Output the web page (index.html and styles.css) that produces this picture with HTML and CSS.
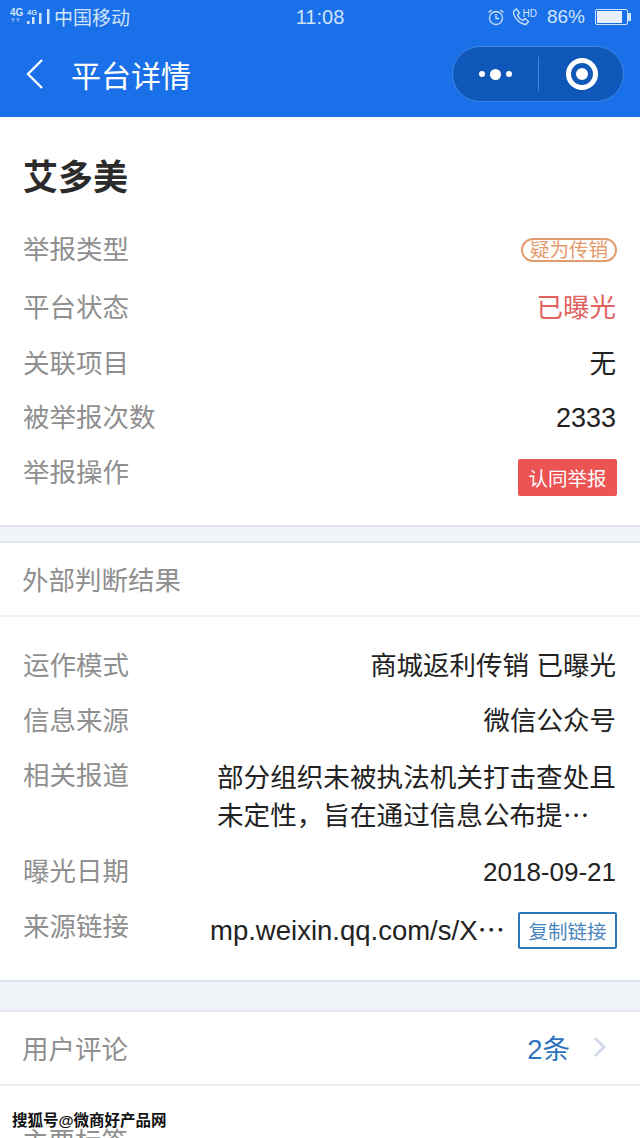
FILE: index.html
```html
<!DOCTYPE html>
<html lang="zh-CN">
  <head>
    <meta charset="UTF-8" />
    <meta name="viewport" content="width=device-width, initial-scale=1" />
    <title>平台详情</title>
    <link rel="stylesheet" href="styles.css">
  </head>
  <body>
    <div class="app">
      <header class="top">
        <div class="status">
          <div class="status-left">
            <svg class="signal" width="40" height="18" viewBox="0 0 40 18" fill="#cfe3fb">
              <text x="0" y="8" font-size="10" font-weight="700">4G</text>
              <text x="17" y="7" font-size="7.500" font-weight="700">4G</text>
              <path d="M3 10v4M1.500 12 3 10l1.500 2M8 10v4M6.500 12 8 10l1.500 2" fill="none" stroke="#8fbdf5"/>
              <path d="M17 13h2.500v3H17zM22 9h2.500v7H22zM29 5h2.500v11H29zM37 1h2.500v15H37z"/>
            </svg>
            <span class="carrier">中国移动</span>
          </div>
          <span class="clock">11:08</span>
          <div class="status-right">
            <svg class="alarm" width="18" height="18" viewBox="0 0 18 18" fill="none" stroke="#cfe3fb" stroke-width="1.300"><circle cx="9" cy="10" r="6.500"/><path d="M9 6v4.500h3M1.500 4.500 4.500 2M16.500 4.500 13.500 2"/></svg>
            <svg class="phone" width="18" height="18" viewBox="0 0 18 18" fill="none" stroke="#cfe3fb" stroke-width="1.300"><path d="M1.500 3.500 4.500 1l3 4-2 2c1 2.500 3 4.500 5.500 5.500l2-2 3.500 3-2.500 3C7.500 16 1.500 9.500 1.500 3.500Z"/></svg>
            <span class="hd">HD</span>
            <span class="pct">86%</span>
            <span class="battery"><span class="battery-fill"></span></span>
          </div>
        </div>
        <div class="nav">
          <svg class="back" width="20" height="32" viewBox="0 0 20 32" fill="none" stroke="#fff" stroke-width="2.400"><path d="M17 2 3 16l14 14"/></svg>
          <h1 class="nav-title">平台详情</h1>
          <div class="capsule">
            <div class="capsule-more"><i class="dot"></i><i class="dot dot-big"></i><i class="dot"></i></div>
            <span class="capsule-line"></span>
            <div class="capsule-close"><i class="ring"></i></div>
          </div>
        </div>
      </header>

      <section class="card card-first">
        <h2 class="name">艾多美</h2>
        <div class="row row-type"><span class="label">举报类型</span><span class="tag">疑为传销</span></div>
        <div class="row row-state"><span class="label">平台状态</span><span class="value red">已曝光</span></div>
        <div class="row row-link"><span class="label">关联项目</span><span class="value">无</span></div>
        <div class="row row-count"><span class="label">被举报次数</span><span class="value count">2333</span></div>
        <div class="row row-action"><span class="label">举报操作</span><button class="btn btn-red">认同举报</button></div>
      </section>

      <div class="gap gap-a"></div>

      <section class="card">
        <div class="card-head card-head-result">外部判断结果</div>
        <div class="card-body">
          <div class="row row-plain"><span class="label">运作模式</span><span class="value">商城返利传销 已曝光</span></div>
          <div class="row row-plain"><span class="label">信息来源</span><span class="value">微信公众号</span></div>
          <div class="row row-report"><span class="label">相关报道</span><p class="report">部分组织未被执法机关打击查处且未定性，旨在通过信息公布提<span class="ell">…</span></p></div>
          <div class="row row-plain"><span class="label">曝光日期</span><span class="value date">2018-09-21</span></div>
          <div class="row row-source">
            <span class="label">来源链接</span>
            <div class="source">
              <span class="source-url">mp.weixin.qq.com/s/X<span class="ell">…</span></span>
              <button class="btn btn-line">复制链接</button>
            </div>
          </div>
        </div>
      </section>

      <div class="gap gap-b"></div>

      <section class="card">
        <div class="card-head card-head-link">
          <span>用户评论</span>
          <span class="more">2条<svg width="14" height="22" viewBox="0 0 14 22" fill="none" stroke="#d3dbe8" stroke-width="3"><path d="m2 2 9 9-9 9"/></svg></span>
        </div>
        <div class="card-head cut">主要标签</div>
      </section>
    </div>
    <div class="watermark">搜狐号@微商好产品网</div>
  </body>
</html>
```

FILE: styles.css
```css
/* Report detail page */
html,
body {
  margin: 0;
  padding: 0;
  height: 1138px;
  overflow: hidden;
  background: #fff;
}
body {
  position: relative;
  color: #222;
  font-family: "Liberation Sans", "Noto Sans CJK SC", sans-serif;
}
.app {
  height: 1138px;
  overflow: hidden;
}

/* Blue top bar */
.top {
  height: 117px;
  background: #1a70e8;
  color: #fff;
}
.status {
  height: 34px;
  padding: 0 8px 0 10px;
  display: flex;
  align-items: center;
  justify-content: space-between;
  color: #cfe3fb;
  font-size: 19px;
}
.status-left,
.status-right {
  display: flex;
  align-items: center;
}
.status-left {
  width: 238px;
}
.status-right {
  width: 240px;
  justify-content: flex-end;
}
.signal {
  margin-right: 5px;
}
.carrier {
  margin: 0 0 2px -1px;
}
.clock {
  font-size: 20px;
}
.alarm {
  margin-right: 7px;
}
.hd {
  margin: -7px 0 0 -7px;
  font-size: 10px;
}
.pct {
  margin: 0 10px;
  font-size: 19px;
}
.battery {
  position: relative;
  width: 29px;
  height: 12px;
  padding: 1px;
  border: 1px solid #cfe3fb;
  border-radius: 2px;
  margin-right: 4px;
}
.battery::after {
  content: "";
  position: absolute;
  left: 32px;
  top: 3px;
  width: 3px;
  height: 8px;
  background: #cfe3fb;
}
.battery-fill {
  display: block;
  width: 25px;
  height: 12px;
  background: #e8f0fb;
}
.nav {
  height: 83px;
  padding: 0 16px 3px 25px;
  box-sizing: border-box;
  display: flex;
  align-items: center;
}
.back {
  margin-right: 26px;
}
.nav-title {
  flex: 1;
  margin: 0;
  font-size: 30px;
  font-weight: 400;
}
.capsule {
  width: 172px;
  height: 56px;
  box-sizing: border-box;
  display: flex;
  align-items: center;
  background: #0f57b8;
  border: 1px solid #3d87e6;
  border-radius: 28px;
}
.capsule-more,
.capsule-close {
  display: flex;
  align-items: center;
  justify-content: center;
  gap: 5px;
}
.capsule-more {
  width: 85px;
}
.capsule-close {
  flex: 1;
  padding-left: 2px;
}
.capsule-line {
  width: 1px;
  height: 34px;
  background: #3d87e6;
}
.dot {
  width: 6px;
  height: 6px;
  border-radius: 50%;
  background: #fff;
}
.dot-big {
  width: 11px;
  height: 11px;
}
.ring {
  width: 12px;
  height: 12px;
  border: 5px solid #1059b8;
  border-radius: 50%;
  background: #fff;
  box-shadow: 0 0 0 5px #fff;
}

/* Cards and rows */
.card {
  background: #fff;
}
.card-first {
  padding: 39px 23px 0;
  height: 408px;
  box-sizing: border-box;
}
.name {
  margin: 0 0 32px;
  font-size: 35px;
  line-height: 44px;
  font-weight: 700;
  color: #2b2b2b;
}
.row {
  display: flex;
  justify-content: space-between;
  font-size: 26.500px;
}
.label {
  flex: none;
  color: #8f8f8f;
  font-size: 26.500px;
  line-height: 36px;
}
.value {
  margin-right: 1px;
  line-height: 36px;
}
.count {
  font-size: 27px;
}
.date {
  margin-right: 1px;
  font-size: 26px;
}
.red {
  color: #e0625f;
}
.row-type {
  height: 58px;
}
.row-state {
  height: 56px;
}
.row-link {
  height: 54px;
}
.row-count {
  height: 55px;
}
.tag {
  box-sizing: border-box;
  height: 24px;
  margin-top: 6px;
  padding: 0 7px;
  border: 2px solid #e39a6c;
  border-radius: 12px;
  color: #e39a6c;
  font-size: 19.500px;
  line-height: 20px;
}
.btn {
  width: 99px;
  height: 37px;
  padding: 0;
  border-radius: 2px;
  font-family: inherit;
  font-size: 19.500px;
}
.btn-red {
  margin-top: 4px;
  border: none;
  background: #ec5353;
  color: #fff;
}
.btn-line {
  flex: none;
  border: 2px solid #2e77b4;
  background: #fff;
  color: #4a86bd;
}
.gap {
  box-sizing: border-box;
  background: #f1f4f8;
  border-top: 2px solid #dfe5ec;
  border-bottom: 2px solid #e4e8ee;
}
.gap-a {
  height: 18px;
}
.gap-b {
  height: 32px;
}
.card-head {
  height: 74px;
  box-sizing: border-box;
  padding: 0 33px 0 22px;
  display: flex;
  align-items: center;
  justify-content: space-between;
  border-bottom: 2px solid #f0f0f0;
  color: #8f8f8f;
  font-size: 26.500px;
}
.card-head-result,
.card-head-link {
  padding-bottom: 2px;
}
.card-body {
  padding: 31px 23px 0;
  height: 363px;
  box-sizing: border-box;
}
.row-plain {
  height: 55px;
}
.row-report {
  height: 96px;
}
.report {
  width: 400px;
  margin: 1px 0 0;
  font-size: 26.600px;
  line-height: 38px;
}
.ell {
  font-family: "Noto Sans CJK SC", sans-serif;
  line-height: 0;
}
.row-source {
  height: 60px;
}
.source {
  display: flex;
  align-items: center;
  gap: 13px;
  height: 37px;
  margin-top: 3px;
}
.source-url {
  font-size: 27.500px;
  line-height: 37px;
  white-space: nowrap;
}
.more {
  display: flex;
  align-items: center;
  gap: 23px;
  color: #2d74bd;
  font-size: 27.500px;
}
.cut {
  border: none;
  padding-top: 32px;
}

/* Photo site watermark over the page */
.watermark {
  position: absolute;
  left: 12px;
  top: 1108px;
  color: #111;
  font-size: 15.500px;
  font-weight: 700;
  text-shadow: 1px 0 #fff, -1px 0 #fff;
}
```
